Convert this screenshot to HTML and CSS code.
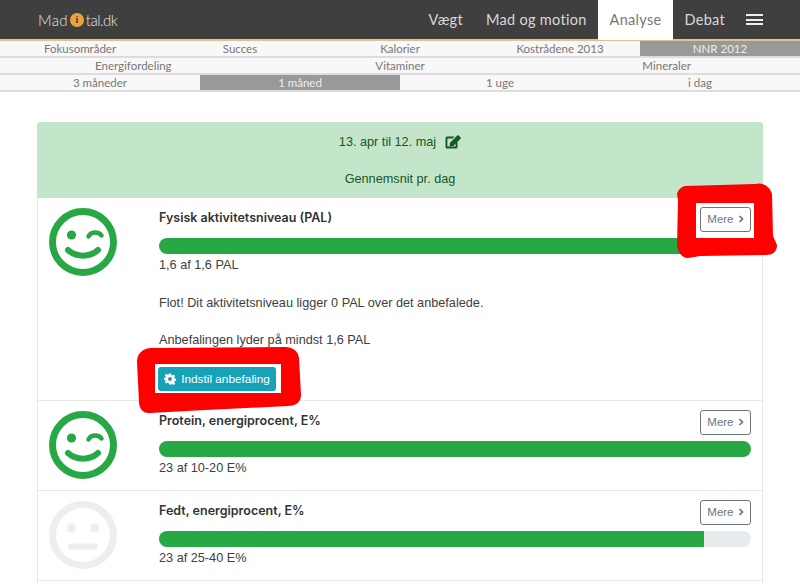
FILE: index.html
```html
<!DOCTYPE HTML>
<html lang="en">
<head>
	<title>Mad i tal</title>
	<meta charset="utf-8">
	<link rel="stylesheet" href="styles.css">
</head>
<body>
	<div class="topbar">
		<div class="logo">Mad<span class="logo-i">i</span><span class="logo-end">tal.dk</span></div>
		<div class="menu">
			<a class="menu-item">Vægt</a>
			<a class="menu-item">Mad og motion</a>
			<a class="menu-item active">Analyse</a>
			<a class="menu-item">Debat</a>
			<div class="burger"><span></span><span></span><span></span></div>
		</div>
	</div>

	<div class="tabs">
		<a>Fokusområder</a>
		<a>Succes</a>
		<a>Kalorier</a>
		<a>Kostrådene 2013</a>
		<a class="on">NNR 2012</a>
	</div>
	<div class="tabs">
		<a>Energifordeling</a>
		<a>Vitaminer</a>
		<a>Mineraler</a>
	</div>
	<div class="tabs">
		<a>3 måneder</a>
		<a class="on">1 måned</a>
		<a>1 uge</a>
		<a>i dag</a>
	</div>

	<div class="panel">
		<div class="panel-head">
			<div class="period">13. apr til 12. maj
				<svg class="edit" viewBox="0 0 16 14" width="16" height="14">
					<path d="M0.5 3a1.500 1.500 0 0 1 1.500-1.500h7.500L7.700 3.400H2.400v8.200h8.200V8.300l1.900-1.900V12a1.500 1.500 0 0 1-1.500 1.500H2A1.500 1.500 0 0 1 .5 12z" fill="#155724"/>
					<path d="M5 7.700 11.500 1.200l3.300 3.300L8.300 11 4.500 11.500zM12.300.5c.5-.4 1-.4 1.400 0l1.800 1.800c.4.400.4 1 0 1.400l-.7.700-3.200-3.200z" fill="#155724"/>
				</svg>
			</div>
			<div>Gennemsnit pr. dag</div>
		</div>

		<div class="row">
			<svg class="smiley" viewBox="0 0 68 68" width="68" height="68">
				<circle cx="34" cy="34" r="30.5" fill="none" stroke="#28a745" stroke-width="7"/>
				<circle cx="22.5" cy="27" r="4.6" fill="#28a745"/>
				<path d="M39.5 28.5c2-5 10-5.500 13-1" fill="none" stroke="#28a745" stroke-width="4.500" stroke-linecap="round"/>
				<path d="M19 42c8 7.500 22 7.500 30 0" fill="none" stroke="#28a745" stroke-width="6" stroke-linecap="round"/>
			</svg>
			<div class="row-body">
				<a class="more">Mere <svg class="chev" viewBox="0 0 6 8" width="6" height="8"><path d="M1.500 1 4.500 4 1.500 7" fill="none" stroke="#6c757d" stroke-width="1.700"/></svg></a>
				<h4>Fysisk aktivitetsniveau (PAL)</h4>
				<div class="bar"><div class="fill" style="width: 100%"></div></div>
				<div>1,6 af 1,6 PAL</div>
				<p>Flot! Dit aktivitetsniveau ligger 0 PAL over det anbefalede.</p>
				<p>Anbefalingen lyder på mindst 1,6 PAL</p>
				<a class="setup">
					<svg viewBox="0 0 24 24" width="12" height="12">
						<path fill="#fff" fill-rule="evenodd" d="M10 1h4l.7 3.200 2 .8 2.800-1.800 2.800 2.800-1.800 2.800.8 2 3.200.7v4l-3.200.7-.8 2 1.800 2.800-2.800 2.800-2.800-1.800-2 .8L14 23h-4l-.7-3.200-2-.8-2.800 1.800-2.800-2.800 1.800-2.800-.8-2L-.5 14v-4l3.200-.7.8-2-1.800-2.800 2.800-2.800 2.800 1.800 2-.8zM12 8a4 4 0 1 0 0 8 4 4 0 0 0 0-8z"/>
					</svg>
					Indstil anbefaling
				</a>
			</div>
		</div>

		<div class="row">
			<svg class="smiley" viewBox="0 0 68 68" width="68" height="68">
				<circle cx="34" cy="34" r="30.5" fill="none" stroke="#28a745" stroke-width="7"/>
				<circle cx="22.5" cy="27" r="4.6" fill="#28a745"/>
				<path d="M39.5 28.5c2-5 10-5.500 13-1" fill="none" stroke="#28a745" stroke-width="4.500" stroke-linecap="round"/>
				<path d="M19 42c8 7.500 22 7.500 30 0" fill="none" stroke="#28a745" stroke-width="6" stroke-linecap="round"/>
			</svg>
			<div class="row-body">
				<a class="more">Mere <svg class="chev" viewBox="0 0 6 8" width="6" height="8"><path d="M1.500 1 4.500 4 1.500 7" fill="none" stroke="#6c757d" stroke-width="1.700"/></svg></a>
				<h4>Protein, energiprocent, E%</h4>
				<div class="bar"><div class="fill" style="width: 100%"></div></div>
				<div>23 af 10-20 E%</div>
			</div>
		</div>

		<div class="row">
			<svg class="smiley" viewBox="0 0 68 68" width="68" height="68">
				<circle cx="34" cy="34" r="30.5" fill="none" stroke="#eeeeee" stroke-width="7"/>
				<circle cx="22.5" cy="27" r="4.600" fill="#eeeeee"/>
				<circle cx="45.5" cy="27" r="4.600" fill="#eeeeee"/>
				<path d="M22 45.500h24" fill="none" stroke="#eeeeee" stroke-width="6" stroke-linecap="round"/>
			</svg>
			<div class="row-body">
				<a class="more">Mere <svg class="chev" viewBox="0 0 6 8" width="6" height="8"><path d="M1.500 1 4.500 4 1.500 7" fill="none" stroke="#6c757d" stroke-width="1.700"/></svg></a>
				<h4>Fedt, energiprocent, E%</h4>
				<div class="bar"><div class="fill" style="width: 92%"></div></div>
				<div>23 af 25-40 E%</div>
			</div>
		</div>
	</div>

	<!-- red marker scribbles drawn on top of the screenshot -->
	<svg class="marks" viewBox="0 0 800 584" width="800" height="584">
		<path fill="#fe0000" fill-rule="evenodd" d="M685 186 755 184C762 182 770 186 772 194L773 236 777 245C777 252 772 255 766 255L700 256 688 258C682 258 678 252 677 246L678 200 677 194C678 190 681 187 685 186ZM696 203 696 238 754 238 754 203Z"/>
		<path fill="#fe0000" fill-rule="evenodd" d="M150 348 285 347C293 347 298 351 299 358L301 395C301 402 296 406 288 406L205 410 150 413C143 414 139 408 139 402L137 362C137 354 142 349 150 348ZM155 364 155 393 281 393 281 364Z"/>
	</svg>
</body>
</html>
```

FILE: styles.css
```css
html {
	height: 100%;
}

body {
	margin: 0;
	padding: 0;
	height: 584px;
	overflow: hidden;
	background: #ffffff;
	color: #404040;
	font-family: "Liberation Sans", "Inter", sans-serif;
	font-size: 12.7px;
	line-height: 18px;
	position: relative;
	display: flex;
	flex-direction: column;
}

.topbar {
	height: 39px;
	display: flex;
	justify-content: space-between;
	padding: 0 37px 0 38px;
	background: #3f3f3f;
	border-bottom: 2px solid #e0c48f;
	font-family: "Lato", "Open Sans", sans-serif;
}

.logo {
	display: flex;
	align-items: center;
	color: #e4e4e4;
	font-size: 15px;
	font-weight: 300;
	letter-spacing: 0.3px;
}

.logo-end {
	letter-spacing: -0.5px;
}

.logo-i {
	width: 14px;
	height: 14px;
	margin: 1px 2px 0;
	border-radius: 50%;
	background: #eba53d;
	color: #4a3a20;
	font: bold 10px/14px "Liberation Serif", serif;
	text-align: center;
	letter-spacing: 0;
}

.menu {
	display: flex;
	align-items: stretch;
}

.menu-item {
	padding: 0 11.5px;
	line-height: 39px;
	color: #d8d8d8;
	font-size: 14.5px;
	letter-spacing: 0.3px;
}

.menu-item.active {
	background: #ffffff;
	color: #777777;
	margin-bottom: -1px;
}

.burger {
	width: 17px;
	margin-left: 9.5px;
	display: flex;
	flex-direction: column;
	justify-content: center;
	gap: 2.500px;
}

.burger span {
	display: block;
	height: 2px;
	background: #eeeeee;
}

.tabs {
	display: flex;
	height: 15px;
	background: #f8f8f8;
	border-bottom: 2px solid #dddddd;
	font-family: "Lato", "Open Sans", sans-serif;
	font-size: 11.5px;
	line-height: 15px;
	color: #777777;
}

.tabs a {
	flex: 1;
	text-align: center;
}

.tabs a.on {
	background: #999999;
	color: #eeeeee;
}

/* the list goes on below the window, so the panel just runs to the bottom edge */
.panel {
	flex: 1;
	margin: 30px 37px 0 37px;
	border: 1px solid #e8e8e8;
	border-bottom: 0;
	border-radius: 3px 3px 0 0;
}

.panel-head {
	height: 76px;
	margin: -1px -1px 0;
	background: #c3e6cb;
	border-radius: 3px 3px 0 0;
	color: #155724;
	text-align: center;
	display: flex;
	flex-direction: column;
	justify-content: space-between;
	padding: 11px 0 10px;
	box-sizing: border-box;
}

.period {
	display: flex;
	justify-content: center;
	align-items: center;
	gap: 9px;
}

.row {
	display: flex;
	padding: 10px 11px 11px 11px;
	border-bottom: 1px solid #e8e8e8;
}

.smiley {
	flex: none;
}

.row-body {
	flex: 1;
	margin-left: 42px;
}

h4 {
	margin: 0;
	height: 30px;
	font-family: "Inter", "Liberation Sans", sans-serif;
	font-size: 12.500px;
	font-weight: 600;
	line-height: 20px;
	color: #333333;
}

.more {
	float: right;
	width: 51px;
	height: 25px;
	margin-top: -1px;
	box-sizing: border-box;
	border: 1px solid #6c757d;
	border-radius: 3px;
	color: #6c757d;
	font-size: 11.5px;
	line-height: 22px;
	text-align: center;
}

.chev {
	margin-left: 1px;
}

.bar {
	height: 16px;
	margin-bottom: 2px;
	border-radius: 8px;
	background: #e9ecef;
	overflow: hidden;
}

.fill {
	height: 100%;
	background: #28a745;
}

p {
	margin: 19.500px 0 0;
}

.setup {
	display: flex;
	align-items: center;
	justify-content: center;
	gap: 5px;
	width: 118px;
	height: 24px;
	margin: 18px 0 -2px -1px;
	border-radius: 3px;
	background: #17a2b8;
	color: #ffffff;
	font-size: 11.8px;
}

.marks {
	position: absolute;
	left: 0;
	top: 0;
}
```
